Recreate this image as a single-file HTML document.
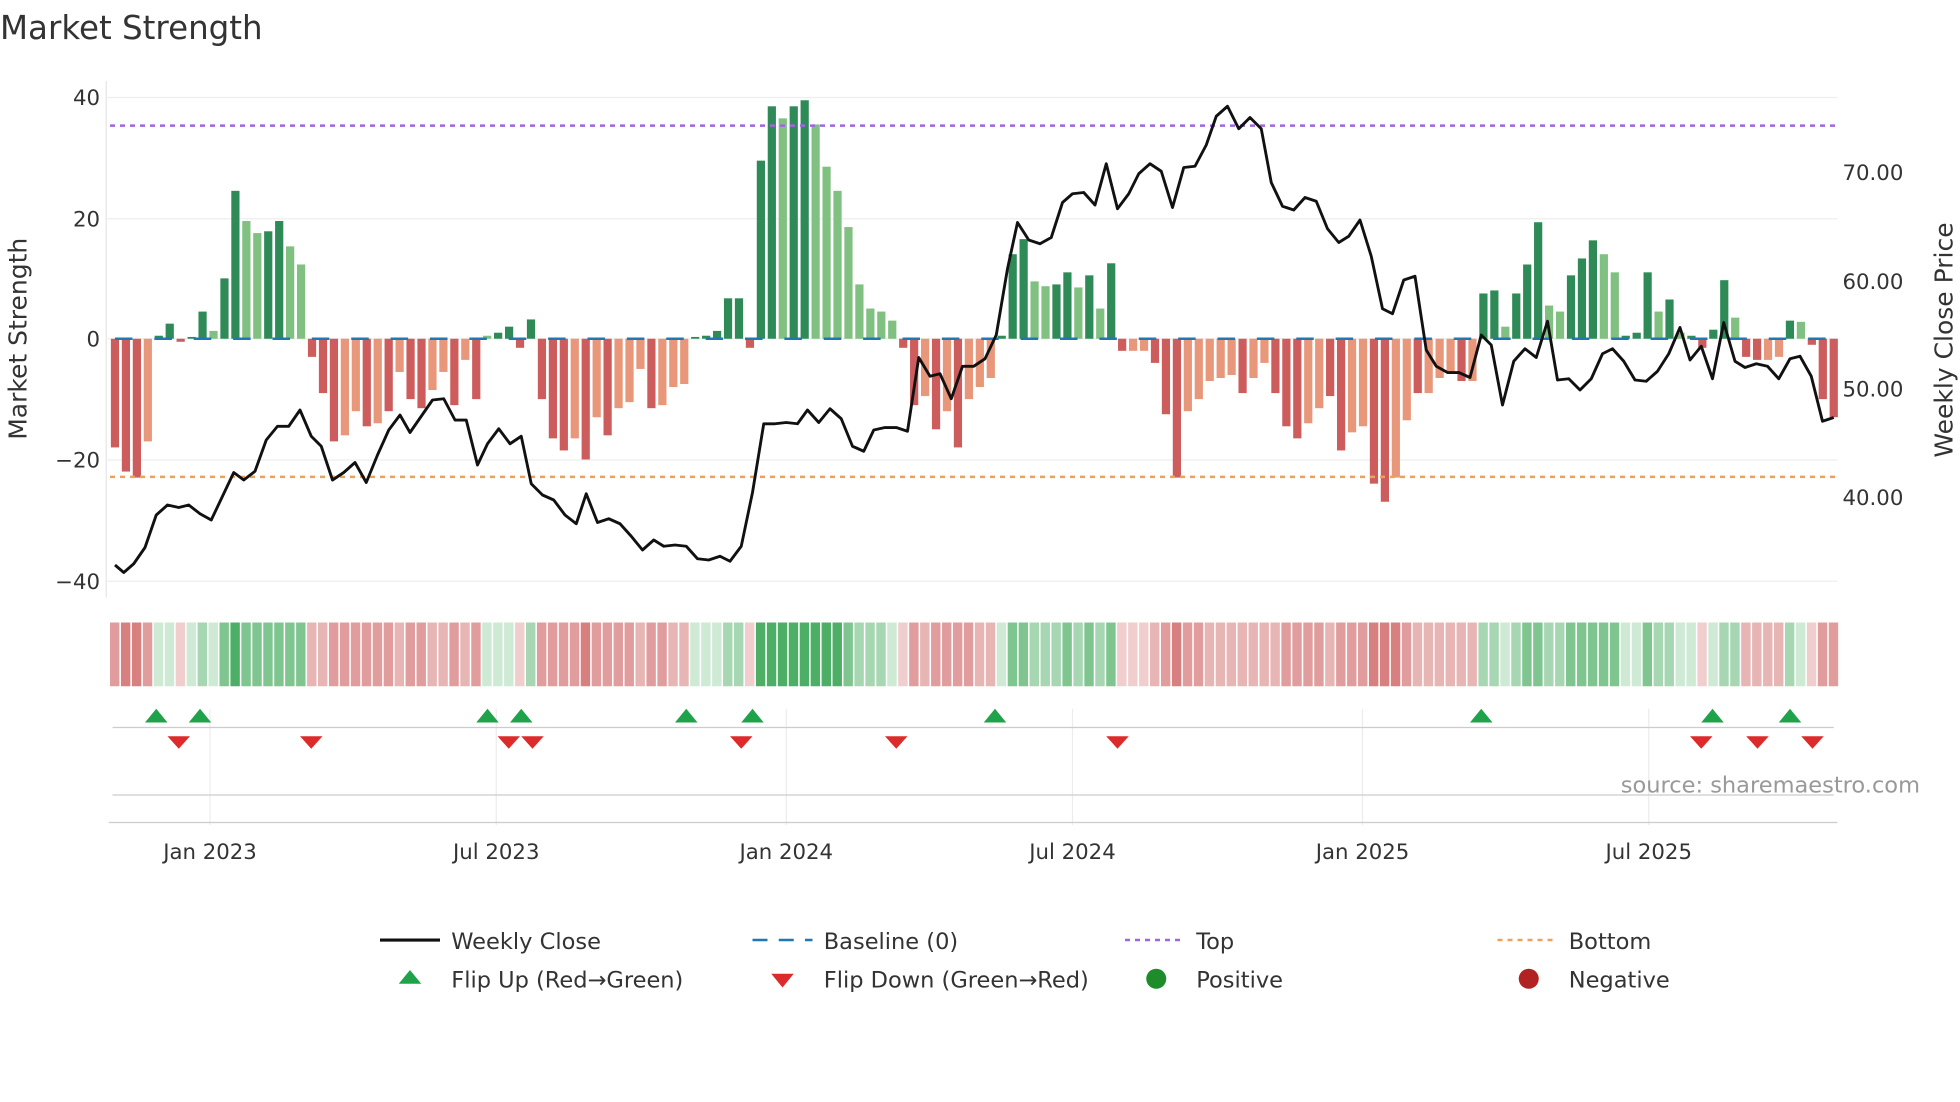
<!DOCTYPE html>
<html><head><meta charset="utf-8"><style>
html,body{margin:0;padding:0;background:#fff;}
svg{display:block;font-family:"DejaVu Sans","Liberation Sans",sans-serif;}
.g{fill:#2e8b57}.lg{fill:#80c080}.r{fill:#cd5c5c}.lr{fill:#e8977a}
.p1{fill:#3aa655;fill-opacity:.25}.p2{fill:#3aa655;fill-opacity:.45}.p3{fill:#3aa655;fill-opacity:.65}.p4{fill:#3aa655;fill-opacity:.9}
.n1{fill:#cd5c5c;fill-opacity:.3}.n2{fill:#cd5c5c;fill-opacity:.45}.n3{fill:#cd5c5c;fill-opacity:.6}.n4{fill:#cd5c5c;fill-opacity:.78}
</style></head><body>
<svg width="1960" height="1102" viewBox="0 0 1568 881.6" xmlns="http://www.w3.org/2000/svg">
<rect width="1568" height="882" fill="#fff"/>
<text x="0" y="31" font-size="26" fill="#333">Market Strength</text>
<g stroke="#eeeeee" stroke-width="1">
<line x1="86" y1="78" x2="1470" y2="78"/><line x1="86" y1="175" x2="1470" y2="175"/><line x1="86" y1="271" x2="1470" y2="271"/><line x1="86" y1="368" x2="1470" y2="368"/><line x1="86" y1="465" x2="1470" y2="465"/>
</g>
<line x1="85" y1="65" x2="85" y2="478" stroke="#e6e6e6"/>
<g font-size="17" fill="#333" text-anchor="end">
<text x="80" y="84">40</text><text x="80" y="181">20</text><text x="80" y="277">0</text><text x="80" y="374">−20</text><text x="80" y="471">−40</text>
</g>
<g font-size="17" fill="#333">
<text x="1474" y="144">70.00</text><text x="1474" y="231">60.00</text><text x="1474" y="317">50.00</text><text x="1474" y="404">40.00</text>
</g>
<text transform="translate(21,271) rotate(-90)" font-size="20" fill="#333" text-anchor="middle">Market Strength</text>
<text transform="translate(1562,272) rotate(-90)" font-size="20" fill="#333" text-anchor="middle">Weekly Close Price</text>
<g transform="translate(88.7,271) scale(8.758,-4.83)">
<rect class="r" x="0" width=".75" y="-18" height="18"/>
<rect class="r" x="1" width=".75" y="-22" height="22"/>
<rect class="r" x="2" width=".75" y="-23" height="23"/>
<rect class="lr" x="3" width=".75" y="-17" height="17"/>
<rect class="g" x="4" width=".75" y="0" height="0.5"/>
<rect class="g" x="5" width=".75" y="0" height="2.5"/>
<rect class="r" x="6" width=".75" y="-0.5" height="0.5"/>
<rect class="g" x="7" width=".75" y="0" height="0.3"/>
<rect class="g" x="8" width=".75" y="0" height="4.5"/>
<rect class="lg" x="9" width=".75" y="0" height="1.3"/>
<rect class="g" x="10" width=".75" y="0" height="10"/>
<rect class="g" x="11" width=".75" y="0" height="24.5"/>
<rect class="lg" x="12" width=".75" y="0" height="19.5"/>
<rect class="lg" x="13" width=".75" y="0" height="17.5"/>
<rect class="g" x="14" width=".75" y="0" height="17.8"/>
<rect class="g" x="15" width=".75" y="0" height="19.5"/>
<rect class="lg" x="16" width=".75" y="0" height="15.3"/>
<rect class="lg" x="17" width=".75" y="0" height="12.3"/>
<rect class="r" x="18" width=".75" y="-3" height="3"/>
<rect class="r" x="19" width=".75" y="-9" height="9"/>
<rect class="r" x="20" width=".75" y="-17" height="17"/>
<rect class="lr" x="21" width=".75" y="-16" height="16"/>
<rect class="lr" x="22" width=".75" y="-12" height="12"/>
<rect class="r" x="23" width=".75" y="-14.5" height="14.5"/>
<rect class="lr" x="24" width=".75" y="-14" height="14"/>
<rect class="r" x="25" width=".75" y="-12" height="12"/>
<rect class="lr" x="26" width=".75" y="-5.5" height="5.5"/>
<rect class="r" x="27" width=".75" y="-10" height="10"/>
<rect class="r" x="28" width=".75" y="-11.5" height="11.5"/>
<rect class="lr" x="29" width=".75" y="-8.5" height="8.5"/>
<rect class="lr" x="30" width=".75" y="-5.5" height="5.5"/>
<rect class="r" x="31" width=".75" y="-11" height="11"/>
<rect class="lr" x="32" width=".75" y="-3.5" height="3.5"/>
<rect class="r" x="33" width=".75" y="-10" height="10"/>
<rect class="lg" x="34" width=".75" y="0" height="0.5"/>
<rect class="g" x="35" width=".75" y="0" height="1"/>
<rect class="g" x="36" width=".75" y="0" height="2"/>
<rect class="r" x="37" width=".75" y="-1.5" height="1.5"/>
<rect class="g" x="38" width=".75" y="0" height="3.2"/>
<rect class="r" x="39" width=".75" y="-10" height="10"/>
<rect class="r" x="40" width=".75" y="-16.5" height="16.5"/>
<rect class="r" x="41" width=".75" y="-18.5" height="18.5"/>
<rect class="lr" x="42" width=".75" y="-16.5" height="16.5"/>
<rect class="r" x="43" width=".75" y="-20" height="20"/>
<rect class="lr" x="44" width=".75" y="-13" height="13"/>
<rect class="r" x="45" width=".75" y="-16" height="16"/>
<rect class="lr" x="46" width=".75" y="-11.5" height="11.5"/>
<rect class="lr" x="47" width=".75" y="-10.5" height="10.5"/>
<rect class="lr" x="48" width=".75" y="-5" height="5"/>
<rect class="r" x="49" width=".75" y="-11.5" height="11.5"/>
<rect class="lr" x="50" width=".75" y="-11" height="11"/>
<rect class="lr" x="51" width=".75" y="-8" height="8"/>
<rect class="lr" x="52" width=".75" y="-7.5" height="7.5"/>
<rect class="g" x="53" width=".75" y="0" height="0.3"/>
<rect class="g" x="54" width=".75" y="0" height="0.5"/>
<rect class="g" x="55" width=".75" y="0" height="1.3"/>
<rect class="g" x="56" width=".75" y="0" height="6.7"/>
<rect class="g" x="57" width=".75" y="0" height="6.7"/>
<rect class="r" x="58" width=".75" y="-1.5" height="1.5"/>
<rect class="g" x="59" width=".75" y="0" height="29.5"/>
<rect class="g" x="60" width=".75" y="0" height="38.5"/>
<rect class="lg" x="61" width=".75" y="0" height="36.5"/>
<rect class="g" x="62" width=".75" y="0" height="38.5"/>
<rect class="g" x="63" width=".75" y="0" height="39.5"/>
<rect class="lg" x="64" width=".75" y="0" height="35.5"/>
<rect class="lg" x="65" width=".75" y="0" height="28.5"/>
<rect class="lg" x="66" width=".75" y="0" height="24.5"/>
<rect class="lg" x="67" width=".75" y="0" height="18.5"/>
<rect class="lg" x="68" width=".75" y="0" height="9"/>
<rect class="lg" x="69" width=".75" y="0" height="5"/>
<rect class="lg" x="70" width=".75" y="0" height="4.5"/>
<rect class="lg" x="71" width=".75" y="0" height="3"/>
<rect class="r" x="72" width=".75" y="-1.5" height="1.5"/>
<rect class="r" x="73" width=".75" y="-11" height="11"/>
<rect class="lr" x="74" width=".75" y="-9.5" height="9.5"/>
<rect class="r" x="75" width=".75" y="-15" height="15"/>
<rect class="lr" x="76" width=".75" y="-12" height="12"/>
<rect class="r" x="77" width=".75" y="-18" height="18"/>
<rect class="lr" x="78" width=".75" y="-10" height="10"/>
<rect class="lr" x="79" width=".75" y="-8" height="8"/>
<rect class="lr" x="80" width=".75" y="-6.5" height="6.5"/>
<rect class="g" x="81" width=".75" y="0" height="0.5"/>
<rect class="g" x="82" width=".75" y="0" height="14"/>
<rect class="g" x="83" width=".75" y="0" height="16.5"/>
<rect class="lg" x="84" width=".75" y="0" height="9.5"/>
<rect class="lg" x="85" width=".75" y="0" height="8.7"/>
<rect class="g" x="86" width=".75" y="0" height="9"/>
<rect class="g" x="87" width=".75" y="0" height="11"/>
<rect class="lg" x="88" width=".75" y="0" height="8.5"/>
<rect class="g" x="89" width=".75" y="0" height="10.5"/>
<rect class="lg" x="90" width=".75" y="0" height="5"/>
<rect class="g" x="91" width=".75" y="0" height="12.5"/>
<rect class="r" x="92" width=".75" y="-2" height="2"/>
<rect class="lr" x="93" width=".75" y="-2" height="2"/>
<rect class="lr" x="94" width=".75" y="-2" height="2"/>
<rect class="r" x="95" width=".75" y="-4" height="4"/>
<rect class="r" x="96" width=".75" y="-12.5" height="12.5"/>
<rect class="r" x="97" width=".75" y="-23" height="23"/>
<rect class="lr" x="98" width=".75" y="-12" height="12"/>
<rect class="lr" x="99" width=".75" y="-10" height="10"/>
<rect class="lr" x="100" width=".75" y="-7" height="7"/>
<rect class="lr" x="101" width=".75" y="-6.5" height="6.5"/>
<rect class="lr" x="102" width=".75" y="-6" height="6"/>
<rect class="r" x="103" width=".75" y="-9" height="9"/>
<rect class="lr" x="104" width=".75" y="-6.5" height="6.5"/>
<rect class="lr" x="105" width=".75" y="-4" height="4"/>
<rect class="r" x="106" width=".75" y="-9" height="9"/>
<rect class="r" x="107" width=".75" y="-14.5" height="14.5"/>
<rect class="r" x="108" width=".75" y="-16.5" height="16.5"/>
<rect class="lr" x="109" width=".75" y="-14" height="14"/>
<rect class="lr" x="110" width=".75" y="-11.5" height="11.5"/>
<rect class="r" x="111" width=".75" y="-9.5" height="9.5"/>
<rect class="r" x="112" width=".75" y="-18.5" height="18.5"/>
<rect class="lr" x="113" width=".75" y="-15.5" height="15.5"/>
<rect class="lr" x="114" width=".75" y="-14.5" height="14.5"/>
<rect class="r" x="115" width=".75" y="-24" height="24"/>
<rect class="r" x="116" width=".75" y="-27" height="27"/>
<rect class="lr" x="117" width=".75" y="-23" height="23"/>
<rect class="lr" x="118" width=".75" y="-13.5" height="13.5"/>
<rect class="r" x="119" width=".75" y="-9" height="9"/>
<rect class="lr" x="120" width=".75" y="-9" height="9"/>
<rect class="lr" x="121" width=".75" y="-6.5" height="6.5"/>
<rect class="lr" x="122" width=".75" y="-5.5" height="5.5"/>
<rect class="r" x="123" width=".75" y="-7" height="7"/>
<rect class="lr" x="124" width=".75" y="-7" height="7"/>
<rect class="g" x="125" width=".75" y="0" height="7.5"/>
<rect class="g" x="126" width=".75" y="0" height="8"/>
<rect class="lg" x="127" width=".75" y="0" height="2"/>
<rect class="g" x="128" width=".75" y="0" height="7.5"/>
<rect class="g" x="129" width=".75" y="0" height="12.3"/>
<rect class="g" x="130" width=".75" y="0" height="19.3"/>
<rect class="lg" x="131" width=".75" y="0" height="5.5"/>
<rect class="lg" x="132" width=".75" y="0" height="4.5"/>
<rect class="g" x="133" width=".75" y="0" height="10.5"/>
<rect class="g" x="134" width=".75" y="0" height="13.3"/>
<rect class="g" x="135" width=".75" y="0" height="16.3"/>
<rect class="lg" x="136" width=".75" y="0" height="14"/>
<rect class="lg" x="137" width=".75" y="0" height="11"/>
<rect class="g" x="138" width=".75" y="0" height="0.5"/>
<rect class="g" x="139" width=".75" y="0" height="1"/>
<rect class="g" x="140" width=".75" y="0" height="11"/>
<rect class="lg" x="141" width=".75" y="0" height="4.5"/>
<rect class="g" x="142" width=".75" y="0" height="6.5"/>
<rect class="lg" x="143" width=".75" y="0" height="1"/>
<rect class="g" x="144" width=".75" y="0" height="0.5"/>
<rect class="r" x="145" width=".75" y="-1.5" height="1.5"/>
<rect class="g" x="146" width=".75" y="0" height="1.5"/>
<rect class="g" x="147" width=".75" y="0" height="9.7"/>
<rect class="lg" x="148" width=".75" y="0" height="3.5"/>
<rect class="r" x="149" width=".75" y="-3" height="3"/>
<rect class="r" x="150" width=".75" y="-3.5" height="3.5"/>
<rect class="lr" x="151" width=".75" y="-3.5" height="3.5"/>
<rect class="lr" x="152" width=".75" y="-3" height="3"/>
<rect class="g" x="153" width=".75" y="0" height="3"/>
<rect class="lg" x="154" width=".75" y="0" height="2.8"/>
<rect class="r" x="155" width=".75" y="-1" height="1"/>
<rect class="r" x="156" width=".75" y="-10" height="10"/>
<rect class="r" x="157" width=".75" y="-13" height="13"/>
</g>
<line x1="92" y1="271" x2="1467" y2="271" stroke="#1f77b4" stroke-width="2" stroke-dasharray="14,17.5"/>
<line x1="88" y1="100.5" x2="1470" y2="100.5" stroke="#a066e0" stroke-width="2" stroke-dasharray="4,4"/>
<line x1="88" y1="381.5" x2="1470" y2="381.5" stroke="#eda25a" stroke-width="2" stroke-dasharray="4,4"/>
<polyline fill="none" stroke="#111" stroke-width="2.3" stroke-linejoin="round" points="92,452 99,458 107,451 116,438 125,412 134,404 143,406 151,404 160,411 169,416 178,397 187,378 195,384 204,377 213,352 222,341 231,341 240,328 249,349 257,357 266,384 275,378 284,370 293,386 302,364 311,344 320,332 328,346 337,333 346,320 355,319 364,336 373,336 382,372 390,355 399,343 408,355 417,349 425,387 434,396 443,400 452,412 461,419 469,395 478,418 487,415 496,419 505,429 514,440 523,432 531,437 540,436 549,437 558,447 567,448 576,445 584,449 593,437 602,394 611,339 620,339 629,338 638,339 646,328 655,338 664,327 673,335 682,357 691,361 699,344 708,342 717,342 726,345 735,286 744,301 752,299 761,319 770,293 779,293 788,287 797,268 806,215 814,178 823,192 832,195 841,190 850,162 858,155 867,154 876,164 885,131 894,167 903,155 911,139 920,131 929,137 938,166 947,134 956,133 965,116 973,93 982,85 991,103 1000,94 1009,103 1017,146 1026,165 1035,168 1044,158 1053,161 1062,183 1071,194 1079,189 1088,176 1097,205 1106,247 1114,251 1123,224 1132,221 1141,280 1149,293 1158,298 1167,298 1176,302 1185,268 1193,276 1202,324 1211,289 1220,279 1229,286 1238,257 1246,304 1255,303 1264,312 1273,303 1282,283 1290,279 1299,289 1308,304 1317,305 1326,297 1335,283 1344,262 1352,288 1361,277 1370,303 1379,258 1388,289 1396,294 1405,291 1414,293 1423,303 1432,287 1440,285 1449,301 1458,337 1467,334"/>
<g transform="translate(88,498) scale(8.758,1)">
<rect class="n3" x="0" width=".86" height="51"/><rect class="n4" x="1" width=".86" height="51"/><rect class="n4" x="2" width=".86" height="51"/><rect class="n3" x="3" width=".86" height="51"/>
<rect class="p1" x="4" width=".86" height="51"/><rect class="p1" x="5" width=".86" height="51"/><rect class="n1" x="6" width=".86" height="51"/><rect class="p1" x="7" width=".86" height="51"/>
<rect class="p2" x="8" width=".86" height="51"/><rect class="p1" x="9" width=".86" height="51"/><rect class="p3" x="10" width=".86" height="51"/><rect class="p4" x="11" width=".86" height="51"/>
<rect class="p3" x="12" width=".86" height="51"/><rect class="p3" x="13" width=".86" height="51"/><rect class="p3" x="14" width=".86" height="51"/><rect class="p3" x="15" width=".86" height="51"/>
<rect class="p3" x="16" width=".86" height="51"/><rect class="p3" x="17" width=".86" height="51"/><rect class="n2" x="18" width=".86" height="51"/><rect class="n2" x="19" width=".86" height="51"/>
<rect class="n3" x="20" width=".86" height="51"/><rect class="n3" x="21" width=".86" height="51"/><rect class="n3" x="22" width=".86" height="51"/><rect class="n3" x="23" width=".86" height="51"/>
<rect class="n3" x="24" width=".86" height="51"/><rect class="n3" x="25" width=".86" height="51"/><rect class="n2" x="26" width=".86" height="51"/><rect class="n3" x="27" width=".86" height="51"/>
<rect class="n3" x="28" width=".86" height="51"/><rect class="n2" x="29" width=".86" height="51"/><rect class="n2" x="30" width=".86" height="51"/><rect class="n3" x="31" width=".86" height="51"/>
<rect class="n2" x="32" width=".86" height="51"/><rect class="n3" x="33" width=".86" height="51"/><rect class="p1" x="34" width=".86" height="51"/><rect class="p1" x="35" width=".86" height="51"/>
<rect class="p1" x="36" width=".86" height="51"/><rect class="n1" x="37" width=".86" height="51"/><rect class="p2" x="38" width=".86" height="51"/><rect class="n3" x="39" width=".86" height="51"/>
<rect class="n3" x="40" width=".86" height="51"/><rect class="n3" x="41" width=".86" height="51"/><rect class="n3" x="42" width=".86" height="51"/><rect class="n4" x="43" width=".86" height="51"/>
<rect class="n3" x="44" width=".86" height="51"/><rect class="n3" x="45" width=".86" height="51"/><rect class="n3" x="46" width=".86" height="51"/><rect class="n3" x="47" width=".86" height="51"/>
<rect class="n2" x="48" width=".86" height="51"/><rect class="n3" x="49" width=".86" height="51"/><rect class="n3" x="50" width=".86" height="51"/><rect class="n2" x="51" width=".86" height="51"/>
<rect class="n2" x="52" width=".86" height="51"/><rect class="p1" x="53" width=".86" height="51"/><rect class="p1" x="54" width=".86" height="51"/><rect class="p1" x="55" width=".86" height="51"/>
<rect class="p2" x="56" width=".86" height="51"/><rect class="p2" x="57" width=".86" height="51"/><rect class="n1" x="58" width=".86" height="51"/><rect class="p4" x="59" width=".86" height="51"/>
<rect class="p4" x="60" width=".86" height="51"/><rect class="p4" x="61" width=".86" height="51"/><rect class="p4" x="62" width=".86" height="51"/><rect class="p4" x="63" width=".86" height="51"/>
<rect class="p4" x="64" width=".86" height="51"/><rect class="p4" x="65" width=".86" height="51"/><rect class="p4" x="66" width=".86" height="51"/><rect class="p3" x="67" width=".86" height="51"/>
<rect class="p2" x="68" width=".86" height="51"/><rect class="p2" x="69" width=".86" height="51"/><rect class="p2" x="70" width=".86" height="51"/><rect class="p1" x="71" width=".86" height="51"/>
<rect class="n1" x="72" width=".86" height="51"/><rect class="n3" x="73" width=".86" height="51"/><rect class="n2" x="74" width=".86" height="51"/><rect class="n3" x="75" width=".86" height="51"/>
<rect class="n3" x="76" width=".86" height="51"/><rect class="n3" x="77" width=".86" height="51"/><rect class="n3" x="78" width=".86" height="51"/><rect class="n2" x="79" width=".86" height="51"/>
<rect class="n2" x="80" width=".86" height="51"/><rect class="p1" x="81" width=".86" height="51"/><rect class="p3" x="82" width=".86" height="51"/><rect class="p3" x="83" width=".86" height="51"/>
<rect class="p2" x="84" width=".86" height="51"/><rect class="p2" x="85" width=".86" height="51"/><rect class="p2" x="86" width=".86" height="51"/><rect class="p3" x="87" width=".86" height="51"/>
<rect class="p2" x="88" width=".86" height="51"/><rect class="p3" x="89" width=".86" height="51"/><rect class="p2" x="90" width=".86" height="51"/><rect class="p3" x="91" width=".86" height="51"/>
<rect class="n1" x="92" width=".86" height="51"/><rect class="n1" x="93" width=".86" height="51"/><rect class="n1" x="94" width=".86" height="51"/><rect class="n2" x="95" width=".86" height="51"/>
<rect class="n3" x="96" width=".86" height="51"/><rect class="n4" x="97" width=".86" height="51"/><rect class="n3" x="98" width=".86" height="51"/><rect class="n3" x="99" width=".86" height="51"/>
<rect class="n2" x="100" width=".86" height="51"/><rect class="n2" x="101" width=".86" height="51"/><rect class="n2" x="102" width=".86" height="51"/><rect class="n2" x="103" width=".86" height="51"/>
<rect class="n2" x="104" width=".86" height="51"/><rect class="n2" x="105" width=".86" height="51"/><rect class="n2" x="106" width=".86" height="51"/><rect class="n3" x="107" width=".86" height="51"/>
<rect class="n3" x="108" width=".86" height="51"/><rect class="n3" x="109" width=".86" height="51"/><rect class="n3" x="110" width=".86" height="51"/><rect class="n2" x="111" width=".86" height="51"/>
<rect class="n3" x="112" width=".86" height="51"/><rect class="n3" x="113" width=".86" height="51"/><rect class="n3" x="114" width=".86" height="51"/><rect class="n4" x="115" width=".86" height="51"/>
<rect class="n4" x="116" width=".86" height="51"/><rect class="n4" x="117" width=".86" height="51"/><rect class="n3" x="118" width=".86" height="51"/><rect class="n2" x="119" width=".86" height="51"/>
<rect class="n2" x="120" width=".86" height="51"/><rect class="n2" x="121" width=".86" height="51"/><rect class="n2" x="122" width=".86" height="51"/><rect class="n2" x="123" width=".86" height="51"/>
<rect class="n2" x="124" width=".86" height="51"/><rect class="p2" x="125" width=".86" height="51"/><rect class="p2" x="126" width=".86" height="51"/><rect class="p1" x="127" width=".86" height="51"/>
<rect class="p2" x="128" width=".86" height="51"/><rect class="p3" x="129" width=".86" height="51"/><rect class="p3" x="130" width=".86" height="51"/><rect class="p2" x="131" width=".86" height="51"/>
<rect class="p2" x="132" width=".86" height="51"/><rect class="p3" x="133" width=".86" height="51"/><rect class="p3" x="134" width=".86" height="51"/><rect class="p3" x="135" width=".86" height="51"/>
<rect class="p3" x="136" width=".86" height="51"/><rect class="p3" x="137" width=".86" height="51"/><rect class="p1" x="138" width=".86" height="51"/><rect class="p1" x="139" width=".86" height="51"/>
<rect class="p3" x="140" width=".86" height="51"/><rect class="p2" x="141" width=".86" height="51"/><rect class="p2" x="142" width=".86" height="51"/><rect class="p1" x="143" width=".86" height="51"/>
<rect class="p1" x="144" width=".86" height="51"/><rect class="n1" x="145" width=".86" height="51"/><rect class="p1" x="146" width=".86" height="51"/><rect class="p2" x="147" width=".86" height="51"/>
<rect class="p2" x="148" width=".86" height="51"/><rect class="n2" x="149" width=".86" height="51"/><rect class="n2" x="150" width=".86" height="51"/><rect class="n2" x="151" width=".86" height="51"/>
<rect class="n2" x="152" width=".86" height="51"/><rect class="p2" x="153" width=".86" height="51"/><rect class="p1" x="154" width=".86" height="51"/><rect class="n1" x="155" width=".86" height="51"/>
<rect class="n3" x="156" width=".86" height="51"/><rect class="n3" x="157" width=".86" height="51"/>
</g>
<g stroke="#ececec"><line x1="168" y1="567" x2="168" y2="660"/><line x1="397" y1="567" x2="397" y2="660"/><line x1="629" y1="567" x2="629" y2="660"/><line x1="858" y1="567" x2="858" y2="660"/><line x1="1090" y1="567" x2="1090" y2="660"/><line x1="1319" y1="567" x2="1319" y2="660"/></g>
<line x1="90" y1="582" x2="1467" y2="582" stroke="#ccc"/>
<line x1="90" y1="636" x2="1467" y2="636" stroke="#ccc"/>
<line x1="87" y1="658" x2="1470" y2="658" stroke="#ccc"/>
<g fill="#1fa34a">
<polygon points="116,578 125,567 134,578"/><polygon points="151,578 160,567 169,578"/><polygon points="381,578 390,567 399,578"/><polygon points="408,578 417,567 426,578"/><polygon points="540,578 549,567 558,578"/><polygon points="593,578 602,567 611,578"/><polygon points="787,578 796,567 805,578"/><polygon points="1176,578 1185,567 1194,578"/><polygon points="1361,578 1370,567 1379,578"/><polygon points="1423,578 1432,567 1441,578"/>
</g>
<g fill="#dd2b2b">
<polygon points="134,589 143,599 152,589"/><polygon points="240,589 249,599 258,589"/><polygon points="398,589 407,599 416,589"/><polygon points="417,589 426,599 435,589"/><polygon points="584,589 593,599 602,589"/><polygon points="708,589 717,599 726,589"/><polygon points="885,589 894,599 903,589"/><polygon points="1352,589 1361,599 1370,589"/><polygon points="1397,589 1406,599 1415,589"/><polygon points="1441,589 1450,599 1459,589"/>
</g>
<text x="1536" y="634" font-size="18" fill="#999" text-anchor="end">source: sharemaestro.com</text>
<g font-size="17" fill="#333" text-anchor="middle">
<text x="168" y="687">Jan 2023</text><text x="397" y="687">Jul 2023</text><text x="629" y="687">Jan 2024</text><text x="858" y="687">Jul 2024</text><text x="1090" y="687">Jan 2025</text><text x="1319" y="687">Jul 2025</text>
</g>
<g font-size="18" fill="#333">
<line x1="304" y1="752" x2="352" y2="752" stroke="#111" stroke-width="2.5"/><text x="361" y="759">Weekly Close</text>
<line x1="602" y1="752" x2="650" y2="752" stroke="#1f77b4" stroke-width="2" stroke-dasharray="12,9"/><text x="659" y="759">Baseline (0)</text>
<line x1="900" y1="752" x2="948" y2="752" stroke="#a066e0" stroke-width="2" stroke-dasharray="4,4"/><text x="957" y="759">Top</text>
<line x1="1198" y1="752" x2="1246" y2="752" stroke="#eda25a" stroke-width="2" stroke-dasharray="4,4"/><text x="1255" y="759">Bottom</text>
<polygon points="319,787 328,776 337,787" fill="#1fa34a"/><text x="361" y="790">Flip Up (Red→Green)</text>
<polygon points="617,779 626,790 635,779" fill="#dd2b2b"/><text x="659" y="790">Flip Down (Green→Red)</text>
<circle cx="925" cy="783" r="8" fill="#1e8c2a"/><text x="957" y="790">Positive</text>
<circle cx="1223" cy="783" r="8" fill="#b22222"/><text x="1255" y="790">Negative</text>
</g>
</svg>
</body></html>
